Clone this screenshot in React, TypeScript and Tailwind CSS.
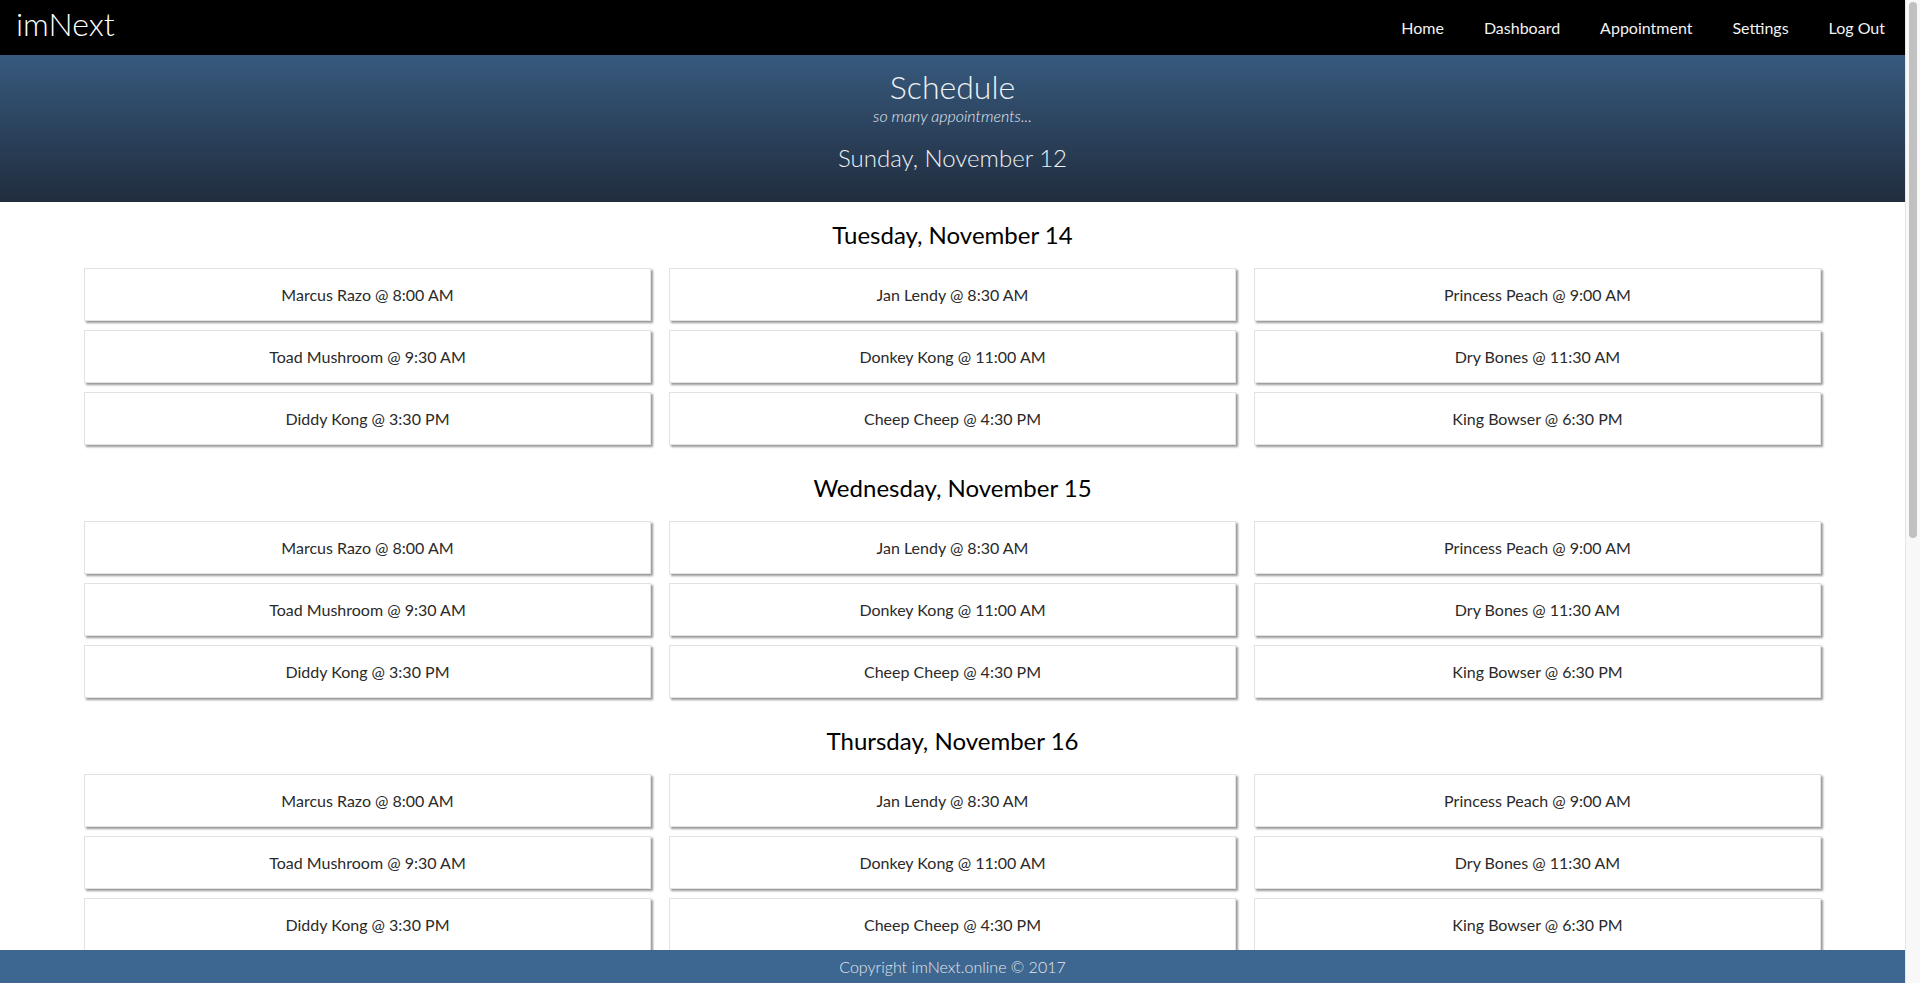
const navLinks = ["Home", "Dashboard", "Appointment", "Settings", "Log Out"];

const appointments = [
  "Marcus Razo @ 8:00 AM",
  "Jan Lendy @ 8:30 AM",
  "Princess Peach @ 9:00 AM",
  "Toad Mushroom @ 9:30 AM",
  "Donkey Kong @ 11:00 AM",
  "Dry Bones @ 11:30 AM",
  "Diddy Kong @ 3:30 PM",
  "Cheep Cheep @ 4:30 PM",
  "King Bowser @ 6:30 PM",
];

const days = [
  "Tuesday, November 14",
  "Wednesday, November 15",
  "Thursday, November 16",
  "Friday, November 17",
  "Saturday, November 18",
  "Monday, November 20",
];

const Navbar = () => {
  return (
    <nav className="h-[55px] shrink-0 bg-black flex items-center justify-between pl-4 pr-0">
      <a className="text-[32px] font-light text-white leading-none -mt-[8px]">imNext</a>
      <ul className="flex items-center">
        {navLinks.map((link) => (
          <li key={link}>
            <a className="px-5 text-[16px] text-[#f2f2f2] leading-[55px] block cursor-pointer">
              {link}
            </a>
          </li>
        ))}
      </ul>
    </nav>
  );
};

const Header = () => {
  return (
    <header className="h-[147px] shrink-0 bg-gradient-to-b from-[#375a7f] to-[#202d3e] text-center text-[#eef1f5] pt-[14px]">
      <h1 className="text-[32px] font-light leading-[36px]">Schedule</h1>
      <p className="text-[16px] italic font-light leading-[22px] text-[#e4e8ee]">so many appointments...</p>
      <h2 className="text-[24px] font-light leading-[32px] mt-[15px]">Sunday, November 12</h2>
    </header>
  );
};

const DaySection = ({ day }: { day: string }) => {
  return (
    <section>
      <h3 className="text-center text-[24px] text-black leading-[36px] py-[15px]">{day}</h3>
      <div className="grid grid-cols-3 gap-x-[18px] gap-y-[9px]">
        {appointments.map((a, index) => (
          <div
            key={index}
            className="h-[53px] bg-white border border-[#e2e2e2] shadow-[2px_2px_2px_rgba(0,0,0,0.4)] flex items-center justify-center text-[16px] text-[#2a2a2a] cursor-pointer"
          >
            {a}
          </div>
        ))}
      </div>
    </section>
  );
};

export default function App() {
  return (
    <div className="h-screen flex bg-white font-['Lato','Open_Sans',sans-serif]">
      <div className="flex-1 min-w-0 flex flex-col">
        <div className="flex-1 min-h-0 overflow-hidden">
          <Navbar />
          <Header />
          <main className="px-[84px] pb-[84px] flex flex-col gap-[10px]">
            {days.map((d) => (
              <DaySection day={d} key={d} />
            ))}
          </main>
        </div>
        <footer className="h-[33px] shrink-0 bg-[#3d6690] flex items-center justify-center text-[16px] text-[#e3e8ee] font-light">
          Copyright imNext.online © 2017
        </footer>
      </div>
      {/* scrollbar */}
      <div className="w-[15px] shrink-0 bg-[#f8f8f8] border-l border-[#e6e6e6] pt-[2px] pl-[3px]">
        <div className="w-[8px] h-[536px] rounded-full bg-[#c1c1c1]"></div>
      </div>
    </div>
  );
}
